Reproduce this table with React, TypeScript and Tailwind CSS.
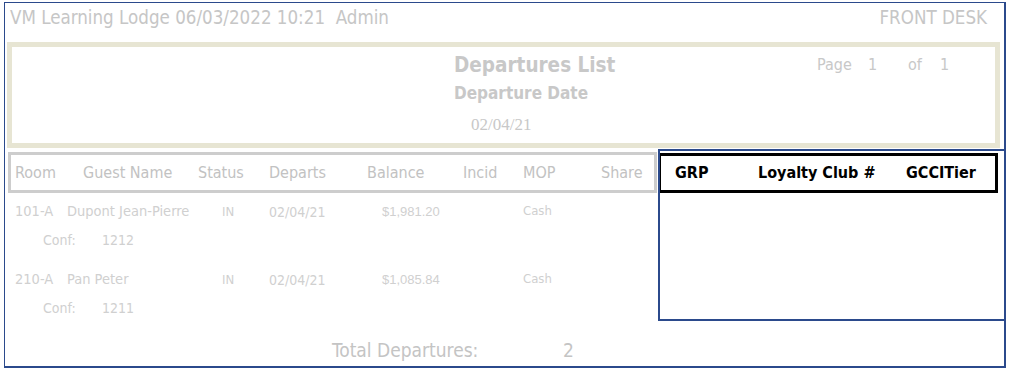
const tahoma = "font-[DejaVu_Sans_Condensed,DejaVu_Sans,sans-serif]";

type Departure = {
  room: string;
  guest: string;
  status: string;
  departs: string;
  balance: string;
  mop: string;
  conf: string;
};

const departures: Departure[] = [
  {
    room: "101-A",
    guest: "Dupont Jean-Pierre",
    status: "IN",
    departs: "02/04/21",
    balance: "$1,981.20",
    mop: "Cash",
    conf: "1212",
  },
  {
    room: "210-A",
    guest: "Pan Peter",
    status: "IN",
    departs: "02/04/21",
    balance: "$1,085.84",
    mop: "Cash",
    conf: "1211",
  },
];

const DepartureRow = ({ row, first }: { row: Departure; first: boolean }) => (
  <div className={first ? "mt-[9px]" : "mt-[20px]"}>
    <div className="flex h-[20px] items-center pl-[10px] text-[14px] text-[#d0d0d0]">
      <span className="w-[52px] text-[14.5px]">{row.room}</span>
      <span className="w-[155px] text-[14.5px]">{row.guest}</span>
      <span className="w-[47px] text-[13px]">{row.status}</span>
      <span className="w-[113px]">{row.departs}</span>
      <span className="w-[141px] font-[Liberation_Sans,Arial,sans-serif] text-[13px]">
        {row.balance}
      </span>
      <span className="-mt-[2px] text-[13px]">{row.mop}</span>
    </div>
    <div className="mt-[8px] flex h-[20px] items-center pl-[38px] text-[14px] text-[#d0d0d0]">
      <span className="w-[59px]">Conf:</span>
      <span>{row.conf}</span>
    </div>
  </div>
);

export default function App() {
  return (
    <div className={`h-[371px] w-[1011px] bg-white pl-[4px] pt-[2px] ${tahoma}`}>
      <div className="relative h-[366px] w-[1002px] border-b-2 border-l border-r-2 border-t border-[#2b4a8c]">
        <header className="flex h-[39px] items-start justify-between pl-[5px] pr-[17px] pt-[4px] text-[18.6px] leading-[22px] text-[#c6c6c6]">
          <span>VM Learning Lodge 06/03/2022 10:21&nbsp; Admin</span>
          <span>FRONT DESK</span>
        </header>

        <section className="ml-[2px] flex h-[106px] w-[993px] border-[5px] border-[#e7e5d3] text-[#c8c8c8]">
          <div className="ml-[442px] flex w-[363px] flex-col items-start pt-[5px]">
            <h1 className="text-[20.5px] font-bold leading-[26px]">Departures List</h1>
            <h2 className="mt-[4px] text-[17px] font-bold leading-[22px]">Departure Date</h2>
            <time className="ml-[17px] mt-[10px] font-[Liberation_Serif,serif] text-[17px] leading-[22px]">
              02/04/21
            </time>
          </div>
          <div className="flex pt-[5px] text-[16px] leading-[26px]">
            <span className="w-[51px]">Page</span>
            <span className="w-[40px]">1</span>
            <span className="w-[32px]">of</span>
            <span>1</span>
          </div>
        </section>

        <div className="mt-[4px] flex">
          <div className="ml-[3px] flex h-[41px] w-[649px] items-center border-[3px] border-[#cdcdcd] pl-[4px] text-[16px] text-[#c2c2c2]">
            <span className="w-[68px]">Room</span>
            <span className="w-[115px]">Guest Name</span>
            <span className="w-[71px]">Status</span>
            <span className="w-[98px]">Departs</span>
            <span className="w-[96px]">Balance</span>
            <span className="w-[60px]">Incid</span>
            <span className="w-[78px]">MOP</span>
            <span>Share</span>
          </div>
          <div className="ml-[1px] mt-[1px] flex h-[40px] w-[340px] items-center border-[3px] border-black pl-[14px] text-[16px] font-bold text-black">
            <span className="w-[83px]">GRP</span>
            <span className="w-[148px]">Loyalty Club #</span>
            <span>GCCITier</span>
          </div>
        </div>

        {departures.map((row, i) => (
          <DepartureRow key={row.room} row={row} first={i === 0} />
        ))}

        <div className="mt-[22px] flex h-[20px] items-center pl-[327px] text-[19px] text-[#c4c4c4]">
          <span className="w-[231px]">Total Departures:</span>
          <span>2</span>
        </div>

        {/* highlight around the extra loyalty columns */}
        <div className="absolute left-[653px] top-[146px] h-[172px] w-[348px] border-2 border-[#2b4a8c]" />
      </div>
    </div>
  );
}
